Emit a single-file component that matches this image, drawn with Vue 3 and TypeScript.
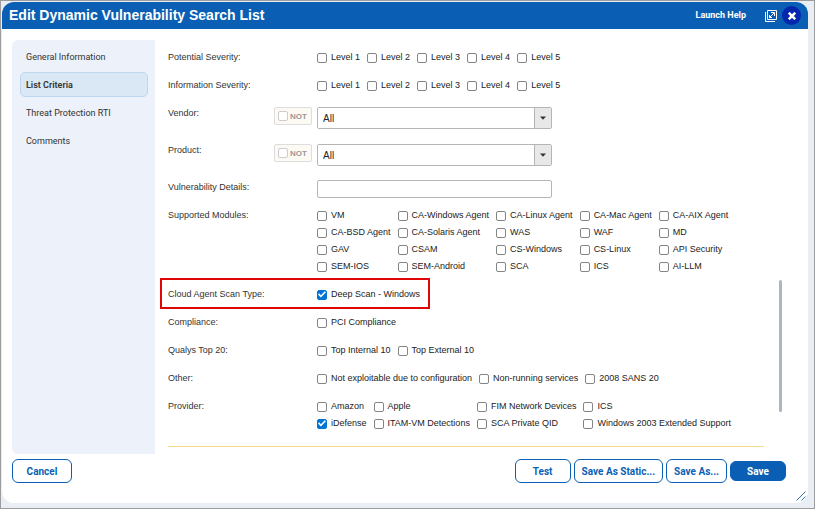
<script setup lang="ts">
import { reactive, ref } from 'vue'

interface Option {
  label: string
  checked?: boolean
}

interface Row {
  id: string
  label: string
  kind: 'checks' | 'combo' | 'text'
  columns?: number
  options?: Option[]
  highlighted?: boolean
}

const sections = ['General Information', 'List Criteria', 'Threat Protection RTI', 'Comments']
const activeSection = ref('List Criteria')

const toOptions = (labels: string[], checked: string[] = []): Option[] =>
  labels.map((label) => ({ label, checked: checked.includes(label) }))

const levels = ['Level 1', 'Level 2', 'Level 3', 'Level 4', 'Level 5']

const rows = reactive<Row[]>([
  { id: 'potential', label: 'Potential Severity:', kind: 'checks', columns: 5, options: toOptions(levels) },
  { id: 'information', label: 'Information Severity:', kind: 'checks', columns: 5, options: toOptions(levels) },
  { id: 'vendor', label: 'Vendor:', kind: 'combo' },
  { id: 'product', label: 'Product:', kind: 'combo' },
  { id: 'details', label: 'Vulnerability Details:', kind: 'text' },
  {
    id: 'modules',
    label: 'Supported Modules:',
    kind: 'checks',
    columns: 5,
    options: toOptions([
      'VM', 'CA-Windows Agent', 'CA-Linux Agent', 'CA-Mac Agent', 'CA-AIX Agent',
      'CA-BSD Agent', 'CA-Solaris Agent', 'WAS', 'WAF', 'MD',
      'GAV', 'CSAM', 'CS-Windows', 'CS-Linux', 'API Security',
      'SEM-IOS', 'SEM-Android', 'SCA', 'ICS', 'AI-LLM',
    ]),
  },
  {
    id: 'scan',
    label: 'Cloud Agent Scan Type:',
    kind: 'checks',
    columns: 1,
    options: toOptions(['Deep Scan - Windows'], ['Deep Scan - Windows']),
    highlighted: true,
  },
  { id: 'compliance', label: 'Compliance:', kind: 'checks', columns: 1, options: toOptions(['PCI Compliance']) },
  { id: 'top20', label: 'Qualys Top 20:', kind: 'checks', columns: 2, options: toOptions(['Top Internal 10', 'Top External 10']) },
  {
    id: 'other',
    label: 'Other:',
    kind: 'checks',
    columns: 3,
    options: toOptions(['Not exploitable due to configuration', 'Non-running services', '2008 SANS 20']),
  },
  {
    id: 'provider',
    label: 'Provider:',
    kind: 'checks',
    columns: 4,
    options: toOptions(
      ['Amazon', 'Apple', 'FIM Network Devices', 'ICS', 'iDefense', 'ITAM-VM Detections', 'SCA Private QID', 'Windows 2003 Extended Support'],
      ['iDefense'],
    ),
  },
])
</script>

<template>
  <div class="page">
    <div class="dialog" role="dialog" aria-labelledby="dialog-title">
      <header class="header">
        <h1 id="dialog-title" class="title">Edit Dynamic Vulnerability Search List</h1>
        <a class="help" href="#">Launch Help</a>
        <button class="icon-button" type="button" aria-label="Open in new window">
          <svg width="12" height="12" viewBox="0 0 12 12" fill="none" stroke="#fff">
            <path d="M2.5 .5h9v9h-9z" />
            <path d="M.5 2v9.5H10" />
            <path d="M4.5 7.5l4.5-4.5M6 2.5h3.500v3.500M4.500 5v2.500H7" />
          </svg>
        </button>
        <button class="close" type="button" aria-label="Close">
          <svg width="8" height="8" viewBox="0 0 8 8" stroke="#fff" stroke-width="2.6">
            <path d="M.8 .8l6.4 6.4M7.2 .8L.8 7.2" />
          </svg>
        </button>
      </header>

      <div class="body">
        <nav class="sidebar">
          <a
            v-for="section in sections"
            :key="section"
            href="#"
            class="nav-item"
            :class="{ active: section === activeSection }"
            @click.prevent="activeSection = section"
          >{{ section }}</a>
        </nav>

        <form class="form" @submit.prevent>
          <div
            v-for="row in rows"
            :key="row.id"
            class="row"
            :class="[`row-${row.kind}`, { highlighted: row.highlighted }]"
            role="group"
            :aria-labelledby="`${row.id}-label`"
          >
            <label v-if="row.kind !== 'checks'" :id="`${row.id}-label`" class="label" :for="`${row.id}-field`">{{ row.label }}</label>
            <span v-else :id="`${row.id}-label`" class="label">{{ row.label }}</span>

            <template v-if="row.kind === 'combo'">
              <label class="not"><input type="checkbox" class="box" />NOT</label>
              <div class="combo">
                <select :id="`${row.id}-field`" class="select">
                  <option>All</option>
                </select>
                <span class="arrow">
                  <svg width="6" height="4" viewBox="0 0 6 4"><path d="M0 .5h6L3 3.7z" fill="#333" /></svg>
                </span>
              </div>
            </template>

            <input v-else-if="row.kind === 'text'" :id="`${row.id}-field`" class="text" type="text" />

            <div v-else class="checks" :class="`columns-${row.columns}`">
              <label v-for="option in row.options" :key="option.label" class="check">
                <input v-model="option.checked" type="checkbox" class="box" />{{ option.label }}
              </label>
            </div>
          </div>
          <hr class="rule" />
        </form>

        <div class="track"><div class="thumb"></div></div>
      </div>

      <footer class="footer">
        <button class="button cancel" type="button">Cancel</button>
        <button class="button" type="button">Test</button>
        <button class="button" type="button">Save As Static...</button>
        <button class="button" type="button">Save As...</button>
        <button class="button primary" type="button">Save</button>
      </footer>

      <svg class="grip" width="10" height="10" viewBox="0 0 10 10" stroke="#2f74c0" fill="none">
        <path d="M.5 9.5l9-9M5.5 9.5l4-4" />
      </svg>
    </div>
  </div>
</template>

<style>
body {
  background: #e9edf2;
}
</style>

<style scoped>
*,
*::before {
  box-sizing: border-box;
}

.page {
  display: flex;
  min-height: 100vh;
  padding: 1px 6px 5px 1px;
  border: 1px solid #9c9c9c;
  background: #e9eef4;
  color: #333;
  font: 9px/17px "Liberation Sans", Arial, sans-serif;
}

.dialog {
  position: relative;
  display: flex;
  flex: 1;
  flex-direction: column;
  overflow: hidden;
  border-radius: 12px;
  background: #fff;
}

.header {
  display: flex;
  align-items: center;
  height: 27px;
  padding: 0 7px;
  background: #0a5fb4;
  color: #fff;
}

.title {
  flex: 1;
  margin: 0;
  font-size: 14px;
  font-weight: 700;
}

.help {
  margin-right: 19px;
  color: #fff;
  font: 700 9px/17px Roboto, sans-serif;
  text-decoration: none;
}

.icon-button,
.close {
  display: flex;
  align-items: center;
  justify-content: center;
  padding: 0;
  border: 0;
  background: none;
}

.close {
  width: 19px;
  height: 19px;
  margin-left: 5px;
  border-radius: 50%;
  background: #0427ae;
}

.body {
  display: flex;
  flex: 1;
  padding: 11px 26px 5px 10px;
}

.sidebar {
  display: flex;
  flex: 0 0 143px;
  flex-direction: column;
  gap: 3px;
  padding: 4px 7px 4px 8px;
  border-radius: 6px 0 0 6px;
  background: #edf1f9;
}

.nav-item {
  padding: 4px 5px 2px;
  border: 1px solid transparent;
  border-radius: 5px;
  color: #333;
  font: 9px/17px Roboto, sans-serif;
  text-decoration: none;
}

.nav-item.active {
  border-color: #bcd7ef;
  background: #dae7f4;
  font-weight: 600;
}

.form {
  flex: 1;
  padding: 9px 15px 0 13px;
}

.row {
  position: relative;
  display: flex;
  align-items: flex-start;
  padding-bottom: 11px;
}

.row-combo {
  padding-bottom: 13px;
}

.row-text {
  padding-bottom: 9px;
}

.row.highlighted::before {
  content: "";
  position: absolute;
  top: -8px;
  left: -8px;
  width: 270px;
  height: 31px;
  border: 2px solid #e00606;
}

.label {
  flex: 0 0 149px;
}

.row-combo .label {
  flex-basis: 106px;
}

.not {
  display: flex;
  align-items: center;
  gap: 2px;
  width: 38px;
  height: 18px;
  margin: 2px 5px 0 0;
  padding: 0 3px;
  border: 1px solid #ddd;
  border-radius: 2px;
  background: #fdfaf3;
  color: #999;
  font-size: 8px;
  font-weight: 700;
}

.not .box {
  border-color: #ccc;
}

.combo {
  display: flex;
  width: 235px;
  height: 22px;
  margin-top: 2px;
  overflow: hidden;
  border: 1px solid #b5b5b5;
  border-radius: 2px;
}

.select {
  flex: 1;
  padding: 0 5px;
  border: 0;
  appearance: none;
  background: #fff;
  color: #222;
  font: 10px "Liberation Sans", Arial, sans-serif;
}

.arrow {
  display: flex;
  align-items: center;
  justify-content: center;
  width: 17px;
  border-left: 1px solid #b5b5b5;
  background: #e8e8e8;
}

.text {
  width: 235px;
  height: 18px;
  margin-top: 1px;
  border: 1px solid #b5b5b5;
  border-radius: 2px;
}

.checks {
  display: grid;
  column-gap: 7px;
}

.columns-2 { grid-template-columns: repeat(2, auto); }
.columns-3 { grid-template-columns: repeat(3, auto); }
.columns-4 { grid-template-columns: repeat(4, auto); }
.columns-5 { grid-template-columns: repeat(5, auto); }

.check {
  display: flex;
  align-items: center;
  gap: 4px;
  color: #222;
  white-space: nowrap;
}

.box {
  flex: none;
  width: 10px;
  height: 10px;
  margin: 0;
  border: 1px solid #858585;
  border-radius: 2px;
  appearance: none;
  background: #fff;
}

.box:checked {
  display: grid;
  place-items: center;
  border-color: #0075d6;
  background: #0075d6;
}

.box:checked::before {
  content: "";
  width: 8px;
  height: 8px;
  background: #fff;
  clip-path: polygon(0 50%, 15% 35%, 36% 58%, 84% 8%, 100% 22%, 36% 88%);
}

.rule {
  height: 1px;
  margin: 3px 0 0;
  border: 0;
  background: #fadb8c;
}

.track {
  display: flex;
  flex-direction: column;
  width: 3px;
}

.track::before {
  content: "";
  flex: 240;
}

.track::after {
  content: "";
  flex: 42;
}

.thumb {
  flex: 132;
  border-radius: 2px;
  background: #a9b7c0;
}

.footer {
  display: flex;
  align-items: center;
  gap: 3px;
  padding: 0 22px 20px 10px;
}

.button {
  min-width: 56px;
  height: 24px;
  padding: 0 7px;
  border: 1px solid #0a5fb4;
  border-radius: 6px;
  background: #fff;
  color: #0a5fb4;
  font: 700 10px/17px Roboto, sans-serif;
  white-space: nowrap;
}

.cancel {
  min-width: 60px;
  margin-right: auto;
}

.primary {
  height: 20px;
  background: #0a5fb4;
  color: #fff;
}

.grip {
  position: absolute;
  right: 2px;
  bottom: 2px;
}
</style>
